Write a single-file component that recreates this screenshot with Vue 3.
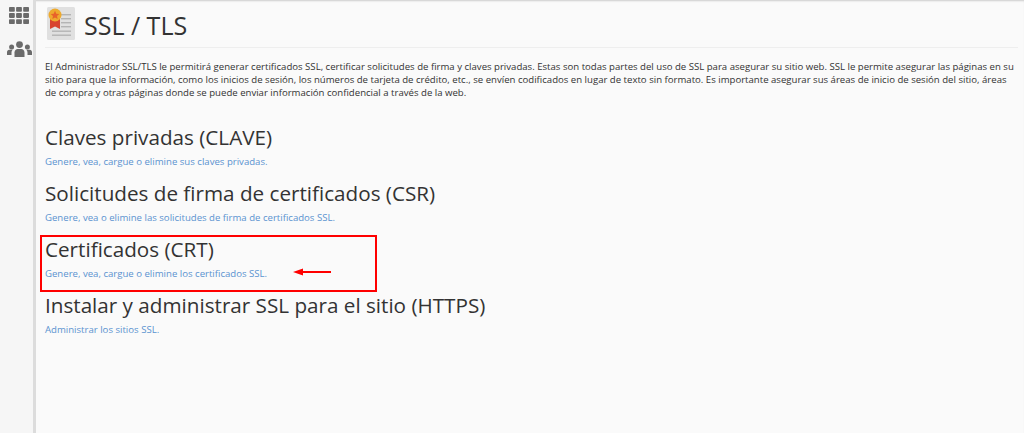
<template>
  <div class="page">
    <aside class="rail">
      <svg class="grid-ic" width="20" height="17" viewBox="0 0 20 17" fill="#6b6b6b">
        <rect v-for="c in cells" :key="c.k" :x="c.x" :y="c.y" width="5.8" height="4.8" rx="0.8" />
      </svg>
      <svg class="users-ic" width="25" height="16" viewBox="0 0 25 16" fill="#6b6b6b">
        <circle cx="12.5" cy="3.6" r="3.4" />
        <path d="M7.5 16v-4.5c0-2.400 1.700-3.600 3-3.600h4c1.300 0 3 1.200 3 3.600V16z" />
        <circle cx="4.600" cy="6" r="2.500" />
        <path d="M0 14v-2.800c0-1.500 1-2.400 2.200-2.400h3.600c-.8.800-1.300 1.700-1.300 2.900V14z" />
        <circle cx="20.400" cy="6" r="2.500" />
        <path d="M25 14v-2.800c0-1.500-1-2.400-2.200-2.400h-3.600c.8.800 1.300 1.700 1.300 2.900V14z" />
      </svg>
    </aside>
    <main class="content">
      <header class="head">
        <svg class="logo" width="28" height="33" viewBox="0 0 28 33">
          <rect width="28" height="33" rx="1.500" fill="#e0e0e0" />
          <g fill="#b4b4b4">
            <rect x="14" y="7" width="10" height="1.400" />
            <rect x="14" y="11" width="10" height="1.400" />
            <rect x="14" y="15" width="10" height="1.400" />
            <rect x="14" y="19" width="10" height="1.400" />
            <rect x="5" y="23.500" width="19" height="1.400" />
            <rect x="5" y="27.500" width="19" height="1.400" />
          </g>
          <path d="M3 11h10v11l-5 -2.500L3 22z" fill="#d8432f" />
          <circle cx="8" cy="8" r="6.500" fill="#eeaa2e" />
          <path d="M8 3.800l1.300 2.900 3 .3-2.300 2 .7 3-2.700-1.600L5.300 12l.7-3-2.300-2 3-.3z" fill="#e8622a" />
        </svg>
        <h1>SSL / TLS</h1>
      </header>
      <p class="intro">El Administrador SSL/TLS le permitirá generar certificados SSL, certificar solicitudes de firma y claves privadas. Estas son todas partes del uso de SSL para asegurar su sitio web. SSL le permite asegurar las páginas en su sitio para que la información, como los inicios de sesión, los números de tarjeta de crédito, etc., se envíen codificados en lugar de texto sin formato. Es importante asegurar sus áreas de inicio de sesión del sitio, áreas de compra y otras páginas donde se puede enviar información confidencial a través de la web.</p>
      <section v-for="s in sections" :key="s.title" class="sec">
        <h2>{{ s.title }}</h2>
        <a class="link">{{ s.link }}</a>
      </section>
      <div class="mark"></div>
      <svg class="arrow" width="38" height="8" viewBox="0 0 38 8">
        <path d="M0 4L10 0.500V3H38V5H10V7.500Z" fill="#f00" />
      </svg>
    </main>
  </div>
</template>

<script setup>
const cells = []
for (let r = 0; r < 3; r++) {
  for (let c = 0; c < 3; c++) {
    cells.push({ k: `${r}-${c}`, x: c * 7.1, y: r * 6.1 })
  }
}
const sections = [
  { title: 'Claves privadas (CLAVE)', link: 'Genere, vea, cargue o elimine sus claves privadas.' },
  { title: 'Solicitudes de firma de certificados (CSR)', link: 'Genere, vea o elimine las solicitudes de firma de certificados SSL.' },
  { title: 'Certificados (CRT)', link: 'Genere, vea, cargue o elimine los certificados SSL.' },
  { title: 'Instalar y administrar SSL para el sitio (HTTPS)', link: 'Administrar los sitios SSL.' }
]
</script>

<style>
html, body { margin: 0; background: #fafafa; overflow: hidden; }
</style>

<style scoped>
.page {
  display: flex;
  width: 1024px;
  height: 433px;
  overflow: hidden;
  font-family: "Open Sans", sans-serif;
  background: #fafafa;
  box-shadow: inset 0 2px 2px -1px #ccc;
}
.rail {
  width: 33px;
  flex: none;
  background: #f6f6f6;
  border-right: 3px solid #dcdcdc;
  display: flex;
  flex-direction: column;
  align-items: center;
  box-sizing: content-box;
}
.grid-ic { margin-top: 7px; margin-left: 5px; }
.users-ic { margin-top: 17px; margin-left: 5px; }
.content {
  position: relative;
  flex: 1;
  padding: 0 6px 0 9px;
  min-width: 0;
}
.head {
  display: flex;
  align-items: center;
  height: 47px;
  border-bottom: 1px solid #eee;
}
.logo { margin-left: 2px; }
h1 {
  margin: 4px 0 0 9px;
  font-size: 25px;
  font-weight: 400;
  color: #333;
  line-height: 1;
}
.intro {
  margin: 12px 0 0;
  font-size: 9.6px;
  line-height: 13px;
  color: #333;
}
.sec { height: 56px; }
.sec:first-of-type { margin-top: 25px; }
h2 {
  margin: 0;
  font-size: 20.66px;
  font-weight: 400;
  line-height: 26px;
  color: #333;
}
.link {
  display: block;
  margin-top: 5px;
  font-size: 9.6px;
  line-height: 13px;
  color: #5a93d0;
}
.mark {
  position: absolute;
  left: 4px;
  top: 235px;
  width: 333px;
  height: 53px;
  border: 2px solid #f00;
  box-sizing: content-box;
}
.arrow {
  position: absolute;
  left: 257px;
  top: 268px;
}
</style>
